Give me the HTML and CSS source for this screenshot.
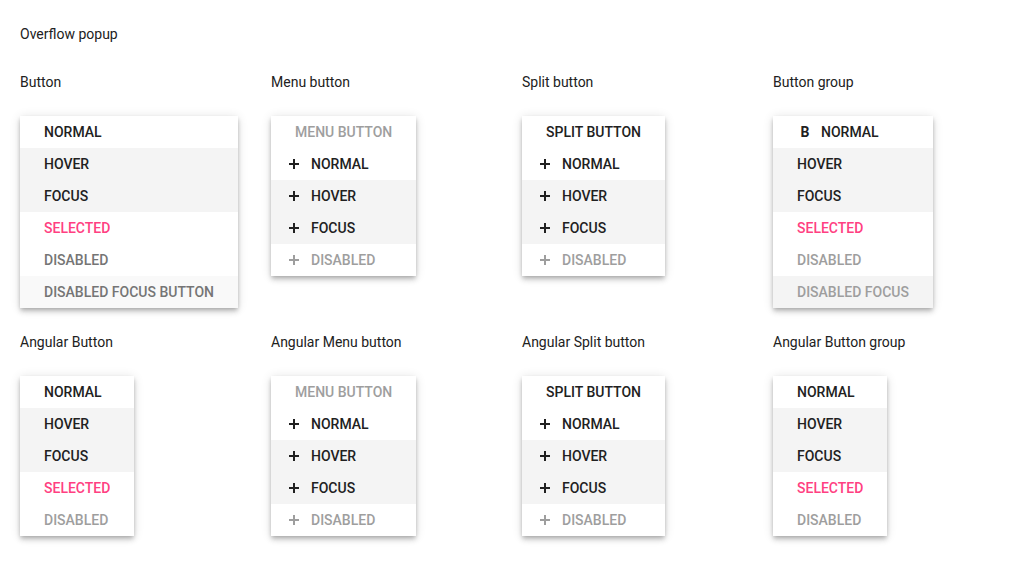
FILE: index.html
```html
<!DOCTYPE html>
<html>
<head>
<meta charset="utf-8">
<link rel="stylesheet" href="styles.css">
</head>
<body>
<div class="page">
  <div class="title">Overflow popup</div>
  <div class="grid">
    <div class="cell">
      <div class="label">Button</div>
      <div class="popup">
        <div class="item">NORMAL</div>
        <div class="item hover">HOVER</div>
        <div class="item hover">FOCUS</div>
        <div class="item selected">SELECTED</div>
        <div class="item disabled-dark">DISABLED</div>
        <div class="item disabled-dark focus-light">DISABLED FOCUS BUTTON</div>
      </div>
    </div>
    <div class="cell">
      <div class="label">Menu button</div>
      <div class="popup">
        <div class="item disabled">MENU BUTTON</div>
        <div class="item icon"><svg class="plus" viewBox="0 0 14 14"><path d="M7 2v10M2 7h10"/></svg>NORMAL</div>
        <div class="item icon hover"><svg class="plus" viewBox="0 0 14 14"><path d="M7 2v10M2 7h10"/></svg>HOVER</div>
        <div class="item icon hover"><svg class="plus" viewBox="0 0 14 14"><path d="M7 2v10M2 7h10"/></svg>FOCUS</div>
        <div class="item icon disabled"><svg class="plus" viewBox="0 0 14 14"><path d="M7 2v10M2 7h10"/></svg>DISABLED</div>
      </div>
    </div>
    <div class="cell">
      <div class="label">Split button</div>
      <div class="popup">
        <div class="item">SPLIT BUTTON</div>
        <div class="item icon"><svg class="plus" viewBox="0 0 14 14"><path d="M7 2v10M2 7h10"/></svg>NORMAL</div>
        <div class="item icon hover"><svg class="plus" viewBox="0 0 14 14"><path d="M7 2v10M2 7h10"/></svg>HOVER</div>
        <div class="item icon hover"><svg class="plus" viewBox="0 0 14 14"><path d="M7 2v10M2 7h10"/></svg>FOCUS</div>
        <div class="item icon disabled"><svg class="plus" viewBox="0 0 14 14"><path d="M7 2v10M2 7h10"/></svg>DISABLED</div>
      </div>
    </div>
    <div class="cell">
      <div class="label">Button group</div>
      <div class="popup">
        <div class="item"><span class="bicon">B</span>NORMAL</div>
        <div class="item hover">HOVER</div>
        <div class="item hover">FOCUS</div>
        <div class="item selected">SELECTED</div>
        <div class="item disabled">DISABLED</div>
        <div class="item disabled hover">DISABLED FOCUS</div>
      </div>
    </div>
    <div class="cell">
      <div class="label">Angular Button</div>
      <div class="popup">
        <div class="item">NORMAL</div>
        <div class="item hover">HOVER</div>
        <div class="item hover">FOCUS</div>
        <div class="item selected">SELECTED</div>
        <div class="item disabled">DISABLED</div>
      </div>
    </div>
    <div class="cell">
      <div class="label">Angular Menu button</div>
      <div class="popup">
        <div class="item disabled">MENU BUTTON</div>
        <div class="item icon"><svg class="plus" viewBox="0 0 14 14"><path d="M7 2v10M2 7h10"/></svg>NORMAL</div>
        <div class="item icon hover"><svg class="plus" viewBox="0 0 14 14"><path d="M7 2v10M2 7h10"/></svg>HOVER</div>
        <div class="item icon hover"><svg class="plus" viewBox="0 0 14 14"><path d="M7 2v10M2 7h10"/></svg>FOCUS</div>
        <div class="item icon disabled"><svg class="plus" viewBox="0 0 14 14"><path d="M7 2v10M2 7h10"/></svg>DISABLED</div>
      </div>
    </div>
    <div class="cell">
      <div class="label">Angular Split button</div>
      <div class="popup">
        <div class="item">SPLIT BUTTON</div>
        <div class="item icon"><svg class="plus" viewBox="0 0 14 14"><path d="M7 2v10M2 7h10"/></svg>NORMAL</div>
        <div class="item icon hover"><svg class="plus" viewBox="0 0 14 14"><path d="M7 2v10M2 7h10"/></svg>HOVER</div>
        <div class="item icon hover"><svg class="plus" viewBox="0 0 14 14"><path d="M7 2v10M2 7h10"/></svg>FOCUS</div>
        <div class="item icon disabled"><svg class="plus" viewBox="0 0 14 14"><path d="M7 2v10M2 7h10"/></svg>DISABLED</div>
      </div>
    </div>
    <div class="cell">
      <div class="label">Angular Button group</div>
      <div class="popup">
        <div class="item">NORMAL</div>
        <div class="item hover">HOVER</div>
        <div class="item hover">FOCUS</div>
        <div class="item selected">SELECTED</div>
        <div class="item disabled">DISABLED</div>
      </div>
    </div>
  </div>
</div>
</body>
</html>
```
FILE: styles.css
```css
html, body {
  margin: 0;
  padding: 0;
  background: #ffffff;
}
body {
  font-family: Roboto, "Liberation Sans", Arial, sans-serif;
  font-size: 14px;
  color: #212121;
}
.page {
  padding: 24px 0 29px 20px;
}
.title {
  line-height: 20px;
  height: 20px;
  margin-bottom: 28px;
}
.grid {
  display: grid;
  grid-template-columns: repeat(4, 251px);
  row-gap: 24px;
}
.cell {
  display: flex;
  flex-direction: column;
  align-items: flex-start;
}
.label {
  line-height: 20px;
  height: 20px;
  margin-bottom: 24px;
}
.popup {
  display: inline-flex;
  flex-direction: column;
  background: #ffffff;
  box-shadow: 0 2px 4px -1px rgba(0,0,0,.2), 0 4px 5px 0 rgba(0,0,0,.14), 0 1px 10px 0 rgba(0,0,0,.12);
}
.item {
  height: 32px;
  display: flex;
  align-items: center;
  padding: 0 24px;
  font-weight: 500;
  white-space: nowrap;
  color: #212121;
}
.item.icon {
  padding-left: 16px;
}
.plus {
  width: 14px;
  height: 14px;
  margin-right: 10px;
  flex: none;
}
.plus path {
  stroke: currentColor;
  stroke-width: 2;
  fill: none;
}
.bicon {
  width: 16px;
  text-align: center;
  margin-right: 8px;
  font-weight: 700;
  font-size: 14px;
}
.hover {
  background: #f4f4f4;
}
.selected {
  color: #ff4081;
}
.disabled {
  color: #9e9e9e;
}
.disabled-dark {
  color: #757575;
}
.focus-light {
  background: #f9f9f9;
}
```
